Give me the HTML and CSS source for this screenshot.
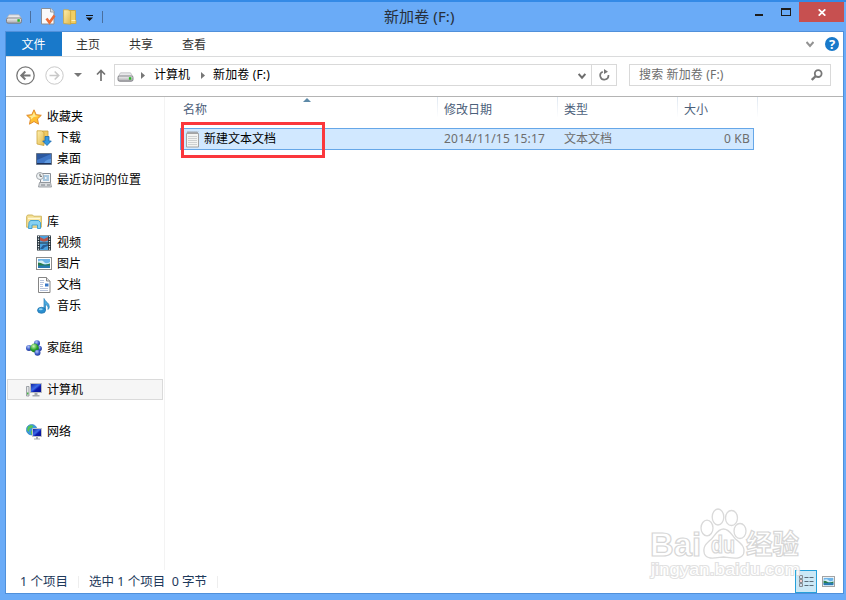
FILE: index.html
```html
<!DOCTYPE html>
<html lang="zh-CN">
<head>
    <meta charset="UTF-8">
    <title>新加卷 (F:)</title>
    <link rel="stylesheet" href="styles.css">
</head>
<body>
    <svg class="defs">
        <defs>
            <linearGradient id="metal" x1="0" y1="0" x2="0" y2="1">
                <stop offset="0" stop-color="#f4f4f4"/><stop offset="1" stop-color="#a8a8ac"/>
            </linearGradient>
            <linearGradient id="gold" x1="0" y1="0" x2="1" y2="1">
                <stop offset="0" stop-color="#fff0ae"/><stop offset="1" stop-color="#e0b84c"/>
            </linearGradient>
            <linearGradient id="screen" x1="0" y1="0" x2="1" y2="1">
                <stop offset="0" stop-color="#0c1c9c"/><stop offset="0.45" stop-color="#3c6ce8"/><stop offset="0.6" stop-color="#0c1cb0"/><stop offset="1" stop-color="#0a1490"/>
            </linearGradient>
            <radialGradient id="blueBall" cx="0.4" cy="0.3" r="0.7">
                <stop offset="0" stop-color="#b4c8f8"/><stop offset="0.6" stop-color="#3c5cc8"/><stop offset="1" stop-color="#243c9c"/>
            </radialGradient>
            <radialGradient id="greenBall" cx="0.4" cy="0.3" r="0.7">
                <stop offset="0" stop-color="#d0f4b8"/><stop offset="0.6" stop-color="#2ca42c"/><stop offset="1" stop-color="#127418"/>
            </radialGradient>
            <symbol id="drive" viewBox="0 0 16 10">
                <path d="M3 .8h10l2.500 4H.5z" fill="#e8e8ea" stroke="#b4b4b8" stroke-width=".7"/>
                <rect x=".5" y="4" width="15" height="5.200" rx="1.600" fill="url(#metal)" stroke="#77777d" stroke-width=".9"/>
                <rect x="11.400" y="5.200" width="2.400" height="2.500" fill="#25b526"/>
            </symbol>
            <symbol id="picture" viewBox="0 0 16 13">
                <rect x=".5" y=".5" width="15" height="12" fill="#fff" stroke="#8c8c8c"/>
                <path d="M2 2h12v9H2z" fill="#6db4e8"/>
                <path d="M2 4.500q4-2 6 .5t6 0v2H2z" fill="#d5edf8"/>
                <path d="M2 5.500q3 0 5 1.500t7-.5V9H2z" fill="#2b7d4c"/>
                <path d="M2 8.500h12V11H2z" fill="#2878b0"/>
            </symbol>
        </defs>
    </svg>

    <div class="window">
        <header class="titlebar">
            <div class="quick">
                <svg class="q-drive" width="16" height="10"><use href="#drive"/></svg>
                <i class="bar"></i>
                <svg class="q-check" width="15" height="17" viewBox="0 0 15 17">
                    <path d="M.5.5h9.500l3 3v12.500H.5z" fill="#fafafa" stroke="#8b8f96"/>
                    <path d="M9.500.5v3.500H13" fill="#ddd" stroke="#8b8f96" stroke-width=".8"/>
                    <path d="M5.500 10.500l3 4 5-7" fill="none" stroke="#ea6c38" stroke-width="2.600"/>
                </svg>
                <svg class="q-folder" width="14" height="16" viewBox="0 0 14 16">
                    <path d="M6 1.500h6.500v10H13v3H6z" fill="#f3cf62" stroke="#cfa535" stroke-width=".8"/>
                    <path d="M.6.8h4.500l2.500 1.500v13L.6 14.500z" fill="url(#gold)" stroke="#cda53c" stroke-width=".8"/>
                    <path d="M8.500 11.500h4" stroke="#fff3bc"/>
                </svg>
                <svg class="q-more" width="7" height="6" viewBox="0 0 7 6"><path d="M0 0h7v1H0zM0 2.500h7L3.500 6z" fill="#111"/></svg>
                <i class="bar last"></i>
            </div>
            <h1 class="title">新加卷 (F:)</h1>
            <div class="controls">
                <svg class="min" width="8" height="2"><path d="M0 0h8v2H0z" fill="#1d1d1d"/></svg>
                <svg class="max" width="10" height="8"><path d="M0 0h10v8H0zM1 2v5h8V2z" fill="#1d1d1d" fill-rule="evenodd"/></svg>
                <span class="close"><svg width="8" height="7" viewBox="0 0 8 7"><path d="M.7.3l6.600 6.400M7.300.3L.7 6.700" stroke="#fff" stroke-width="1.700"/></svg></span>
            </div>
        </header>

        <div class="client">
            <nav class="ribbon">
                <span class="tab file">文件</span>
                <span class="tab">主页</span>
                <span class="tab">共享</span>
                <span class="tab">查看</span>
                <svg class="expand" width="8" height="7" viewBox="0 0 8 7"><path d="M.5 1L4 5 7.500 1" fill="none" stroke="#929292" stroke-width="2"/></svg>
                <span class="help">?</span>
            </nav>

            <div class="navbar">
                <svg width="19" height="19" viewBox="0 0 19 19" fill="none" stroke="#767676">
                    <circle cx="9.500" cy="9.500" r="8.700" stroke-width="1.300"/>
                    <path d="M14.500 9.500H5.500M9.300 5.500l-4 4 4 4" stroke-width="2"/>
                </svg>
                <svg class="forward" width="19" height="19" viewBox="0 0 19 19" fill="none" stroke="#c9c9c9">
                    <circle cx="9.500" cy="9.500" r="8.700"/>
                    <path d="M4.500 9.500h9M9.700 5.500l4 4-4 4" stroke-width="1.600"/>
                </svg>
                <svg class="history" width="8" height="4"><path d="M0 0h8L4 4z" fill="#777"/></svg>
                <svg class="up" width="10" height="12" viewBox="0 0 10 12"><path d="M5 12V1.500M1 5.500l4-4 4 4" fill="none" stroke="#727272" stroke-width="1.700"/></svg>
                <div class="address">
                    <svg class="a-drive" width="17" height="10"><use href="#drive"/></svg>
                    <svg class="sep" width="4" height="7"><path d="M0 0l4 3.500L0 7z" fill="#777"/></svg>
                    <span class="crumb">计算机</span>
                    <svg class="sep" width="4" height="7"><path d="M0 0l4 3.500L0 7z" fill="#777"/></svg>
                    <span class="folder">新加卷 (F:)</span>
                    <svg class="drop" width="8" height="7" viewBox="0 0 8 7"><path d="M.6 1L4 4.700 7.400 1" fill="none" stroke="#6d6d6d" stroke-width="2"/></svg>
                    <span class="refresh">
                        <svg width="11" height="12" viewBox="0 0 11 12"><path d="M3.800 2.700A4.100 4.100 0 1 0 9.400 6" fill="none" stroke="#777" stroke-width="1.700"/><path d="M5 0v5l4-2.300z" fill="#777"/></svg>
                    </span>
                </div>
                <div class="search">
                    <span class="folder">搜索 新加卷 (F:)</span>
                    <svg width="12" height="12" viewBox="0 0 12 12" fill="none" stroke="#777"><circle cx="7.200" cy="4.600" r="3.400" stroke-width="1.800"/><path d="M4.800 7L.8 11" stroke-width="2.400"/></svg>
                </div>
            </div>

            <main class="content">
                <aside class="sidebar">
                    <ul>
                        <li>
                            <svg width="16" height="16" viewBox="0 0 16 16"><path d="M8 .8l2.200 4.900 5.100.6-3.800 3.600 1 5.300L8 12.500l-4.500 2.700 1-5.300L.7 6.300l5.100-.6z" fill="#ffc030" stroke="#e08a2c"/><path d="M8 3l1.300 3.500 3.500.5-5 1-3.500 3 .9-2.500L3 7l3.300-.6z" fill="#ffeb94"/></svg>
                            收藏夹
                        </li>
                        <li class="sub">
                            <svg width="16" height="16" viewBox="0 0 16 16"><path d="M6 1h6v12H6z" fill="#f0ca62" stroke="#c8a03c" stroke-width=".8"/><path d="M1 .8h4.500L8 2.500v13L1 14z" fill="url(#gold)" stroke="#cda53c" stroke-width=".8"/><path d="M9 6.500h4V11h2.300L11 15.500 6.700 11H9z" fill="#3598e0" stroke="#1768ad" stroke-width=".8"/></svg>
                            下载
                        </li>
                        <li class="sub">
                            <svg width="16" height="16" viewBox="0 0 16 16"><path d="M.5 2.500h15v11H.5z" fill="#3f76c6" stroke="#657387"/><path d="M1 3h14L1 9z" fill="#2c589f"/><path d="M8 12c2-3 4-4 7-4v4z" fill="#5f9ae0"/><path d="M1 12h14v1H1z" fill="#1c315a"/></svg>
                            桌面
                        </li>
                        <li class="sub">
                            <svg width="16" height="16" viewBox="0 0 16 16"><path d="M6 1.500h8.500v9H4.500v-3z" fill="#f3f5f7" stroke="#8a8f96"/><path d="M7 4h6M7 6h2M10.500 6H13M7 8h6" stroke="#5d9ac8"/><path d="M3.500 10.500h11l1 4.500h-13z" fill="#d6d9dc" stroke="#8a8f96" stroke-width=".8"/><path d="M5 13h4M11 13h3" stroke="#7c8288"/><circle cx="4" cy="4" r="3.500" fill="#eef2f4" stroke="#a3a8ac"/><path d="M4 1.800V4.300h2" fill="none" stroke="#666"/></svg>
                            最近访问的位置
                        </li>
                    </ul>
                    <ul>
                        <li>
                            <svg width="16" height="16" viewBox="0 0 16 16"><path d="M.6 2.500l1-1.500h5l1 1.200h7.800v11H.6z" fill="#f4de91" stroke="#cdb258" stroke-width=".9"/><path d="M2 4.500h12" stroke="#fff8d6" stroke-width="1.500"/><path d="M3 8.500L4.500 6.500h8L14.500 8.500v6h-3V11H6v3.500H2.500z" fill="#86d0f1" stroke="#399bce" stroke-width=".9"/></svg>
                            库
                        </li>
                        <li class="sub">
                            <svg width="16" height="16" viewBox="0 0 16 16"><path d="M1 .5h14v15H1z" fill="#24313a"/><path d="M4 1h8v6.500H4zM4 8.500h8V15H4z" fill="#4aa1df"/><path d="M4 2l4 2 4-2v3.500L9 6.500H7l-3-1z" fill="#b85448"/><path d="M4 14l3-4h2l3-1v2l-3 1-2 2z" fill="#285c94"/><path d="M2.500 1v14M13.500 1v14" stroke="#eef3f5" stroke-width="1.300" stroke-dasharray="1.300 1.200"/></svg>
                            视频
                        </li>
                        <li class="sub">
                            <svg width="16" height="13"><use href="#picture"/></svg>
                            图片
                        </li>
                        <li class="sub">
                            <svg width="16" height="16" viewBox="0 0 16 16"><path d="M2.500.5h8l3.500 3.500v11.500H2.500z" fill="#fff" stroke="#858585"/><path d="M10.500.5V4H14" fill="#e4e4e4" stroke="#858585"/><path d="M4 3.500h4M4 5.500h4M4 7.500h3M4 9.500h3M4 11.500h8M4 13.500h8" stroke="#b8c4dc"/><path d="M9 6.500h3.500v3H9z" fill="#3b78c6"/></svg>
                            文档
                        </li>
                        <li class="sub">
                            <svg width="16" height="16" viewBox="0 0 16 16"><path d="M8 .5c1 3.500 5.500 4 5.300 8.500-.1 1-.6 2-1.300 2.500.6-3-1-4.700-2.500-5v5.500H8z" fill="#4baae0" stroke="#287fb8" stroke-width=".7"/><ellipse cx="5.500" cy="12.300" rx="4" ry="3" fill="#2a8fd0" stroke="#1d6fa8" stroke-width=".7"/><ellipse cx="4.700" cy="11.300" rx="2" ry="1" fill="#8fd4f5"/></svg>
                            音乐
                        </li>
                    </ul>
                    <ul>
                        <li>
                            <svg width="16" height="16" viewBox="0 0 16 16"><circle cx="11" cy="3.300" r="3" fill="url(#blueBall)"/><circle cx="3" cy="8" r="3" fill="url(#blueBall)"/><circle cx="13.200" cy="8.500" r="2.700" fill="url(#blueBall)"/><circle cx="8.500" cy="8" r="4.400" fill="url(#greenBall)"/><circle cx="11.500" cy="12.800" r="3" fill="url(#blueBall)"/></svg>
                            家庭组
                        </li>
                    </ul>
                    <ul>
                        <li class="selected">
                            <svg width="16" height="16" viewBox="0 0 16 16"><path d="M.5 4.500h2.500v9.500H.5z" fill="#e3e5e8" stroke="#8c9096" stroke-width=".8"/><path d="M1 10.500h1.500v2H1z" fill="#4ab548"/><path d="M4.500 1.500h11v9h-11z" fill="url(#screen)" stroke="#b9bcc0"/><path d="M8.500 11h3v2h2v1.500h-7V13h2z" fill="#a4a8ad"/></svg>
                            计算机
                        </li>
                    </ul>
                    <ul>
                        <li>
                            <svg width="16" height="16" viewBox="0 0 16 16"><circle cx="5.700" cy="5.700" r="5.300" fill="#3b9ae0" stroke="#2278b8" stroke-width=".6"/><path d="M2 2.500l3-1.500 2.500 1-1.500 2-2 .5L2.500 8 1 6zM5 6.500l3 .5-1 3.500H5z" fill="#57c355"/><path d="M6.500 4.500h9v8h-9z" fill="url(#screen)" stroke="#bfc3c8"/><path d="M10 13h2v1.500h2v1H8v-1h2z" fill="#a4a8ad"/></svg>
                            网络
                        </li>
                    </ul>
                </aside>

                <section class="files">
                    <div class="columns head">
                        <span>名称<i class="sort"></i></span>
                        <span>修改日期</span>
                        <span>类型</span>
                        <span>大小</span>
                    </div>
                    <div class="columns row">
                        <span class="name">
                            <svg width="14" height="17" viewBox="0 0 14 17"><path d="M.5 2.500h12v13.500H.5z" fill="#f4f4f2" stroke="#a4a4a4"/><path d="M2 5.500h9M2 7.500h9M2 9.500h9M2 11.500h9M2 13.500h9" stroke="#ced0d0"/><path d="M1 2l1-1.500L3 2l1-1.500L5 2l1-1.500L7 2l1-1.500L9 2l1-1.500L11 2l1-1.500" fill="none" stroke="#999" stroke-width=".9"/></svg>
                            新建文本文档
                        </span>
                        <span class="date">2014/11/15 15:17</span>
                        <span>文本文档</span>
                        <span class="size">0 KB</span>
                        <i class="marker"></i>
                    </div>
                </section>
            </main>

            <footer class="status">
                <span class="count">1 个项目</span>
                <span class="picked">选中 1 个项目&nbsp; 0 字节</span>
                <div class="views">
                    <span class="view active">
                        <svg width="15" height="13" viewBox="0 0 15 13"><path d="M.5.5h3v3h-3zM.5 4.500h3v3h-3zM.5 8.500h3v3h-3z" fill="#fff" stroke="#858b90"/><path d="M1.500 1.500h1v1h-1z" fill="#3b7cc0"/><path d="M1.500 5.500h1v1h-1z" fill="#c33"/><path d="M1.500 9.500h1v1h-1z" fill="#286cb0"/><path d="M5.500 2.500h4M10.500 2.500h4M5.500 6.500h4M10.500 6.500h4M5.500 10.500h4M10.500 10.500h4" stroke="#5b6b78"/></svg>
                    </span>
                    <svg class="large" width="13" height="11"><use href="#picture"/></svg>
                </div>
            </footer>
        </div>

        <svg class="watermark" width="156" height="78" viewBox="0 0 156 78">
            <g fill="#fff" stroke="#d6d6d6" stroke-width="1.300">
                <ellipse cx="59" cy="23" rx="6" ry="7.800"/>
                <ellipse cx="70" cy="12" rx="5.800" ry="8"/>
                <ellipse cx="83.500" cy="13" rx="6" ry="7.500"/>
                <ellipse cx="92" cy="26" rx="6" ry="7.500"/>
                <path d="M75.500 24c6 0 8 6 12 10 6 5 10 8 8 15-3 6-11 4-20 3-9 1-16 3-19-3-2-7 1-10 7-15 4-4 6-10 12-10z"/>
            </g>
            <g class="logo">
                <text x="2" y="51" font-size="34" textLength="51" lengthAdjust="spacingAndGlyphs">Bai</text>
                <text x="63" y="48" font-size="23" textLength="24" lengthAdjust="spacingAndGlyphs">du</text>
                <text x="98" y="49" font-size="27" textLength="53" lengthAdjust="spacingAndGlyphs">经验</text>
                <text class="url" x="3" y="70" font-size="17" textLength="149" lengthAdjust="spacingAndGlyphs">jingyan.baidu.com</text>
            </g>
        </svg>
    </div>
</body>
</html>
```
FILE: styles.css
```css
* {
    box-sizing: border-box;
}

body {
    margin: 0;
    overflow: hidden;
    font: 12px/20px "Noto Sans", "Noto Sans CJK SC", sans-serif;
    color: #000;
}

svg {
    display: block;
    flex: none;
}

.defs {
    position: absolute;
    width: 0;
    height: 0;
}

.window {
    position: relative;
    display: flex;
    flex-direction: column;
    width: 846px;
    height: 600px;
    padding: 0 2px 6px 5px;
    border-top: 2px solid #348ae6;
    background: #6aabf7;
}

/* title bar */
.titlebar {
    display: grid;
    grid-template-columns: 379px auto 1fr;
    height: 29px;
}

.quick {
    display: flex;
    align-items: center;
    height: 29px;
}

.q-drive { margin: 5px 0 0 1px; }
.q-check { margin-left: 10px; }
.q-folder { margin-left: 7px; }
.q-more { margin: 3px 0 0 9px; }

.bar {
    width: 1px;
    height: 12px;
    margin-left: 8px;
    background: #4a6f9f;
}

.bar.last {
    margin-left: 9px;
}

.title {
    margin: 0;
    font-size: 15px;
    font-weight: normal;
    line-height: 29px;
    letter-spacing: 0.1px;
    color: #272f3a;
}

.controls {
    display: flex;
    justify-content: flex-end;
}

.min { margin: 12px 18px 0 0; }
.max { margin: 6px 8px 0 0; }

.close {
    display: flex;
    align-items: center;
    justify-content: center;
    width: 45px;
    height: 20px;
    background: #c75050;
}

/* everything inside the frame */
.client {
    display: flex;
    flex: 1;
    flex-direction: column;
    border: 1px solid #5090da;
    background: #fff;
}

.ribbon {
    display: flex;
    align-items: center;
    height: 25px;
    padding-right: 4px;
    border-bottom: 1px solid #dadbdc;
}

.tab {
    width: 53px;
    height: 24px;
    padding-right: 1px;
    line-height: 25px;
    text-align: center;
    color: #333;
}

.tab.file {
    width: 56px;
    background: #1979ca;
    color: #fff;
}

.expand {
    margin-left: auto;
}

.help {
    width: 14px;
    height: 14px;
    margin-left: 11px;
    border-radius: 50%;
    background: #1979ca;
    color: #fff;
    font-size: 13px;
    font-weight: bold;
    line-height: 14px;
    text-align: center;
}

.navbar {
    display: flex;
    align-items: center;
    height: 40px;
    padding: 0 12px 3px 10px;
    border-bottom: 1px solid #b4b4b4;
}

.forward { margin-left: 10px; }
.history { margin-left: 10px; }
.up { margin-left: 14px; }

.address,
.search {
    display: flex;
    align-items: center;
    height: 22px;
    border: 1px solid #d9d9d9;
}

.address {
    width: 503px;
    margin-left: 8px;
}

.a-drive { margin: 4px 0 0 2px; }
.sep { margin: 0 8px 0 7px; }
.crumb { margin: 0 4px 0 1px; }
.folder { letter-spacing: 0.15px; }
.drop { margin: 2px 5px 0 auto; }

.refresh {
    display: flex;
    align-items: center;
    justify-content: center;
    width: 25px;
    height: 20px;
    border-left: 1px solid #d9d9d9;
}

.search {
    flex: 1;
    justify-content: space-between;
    margin-left: 12px;
    padding: 0 7px 0 9px;
    color: #6d6d6d;
}

.content {
    display: flex;
    flex: 1;
}

.sidebar {
    width: 159px;
    padding: 9px 1px 0 1px;
    border-right: 1px solid #f3f3f3;
}

.sidebar ul {
    margin: 0 0 21px;
    padding: 0;
    list-style: none;
}

.sidebar li {
    display: flex;
    gap: 5px;
    align-items: center;
    height: 21px;
    padding-left: 19px;
}

.sidebar .sub {
    padding-left: 29px;
}

.sidebar .selected {
    padding-left: 18px;
    border: 1px solid #dadada;
    background: #f6f6f6;
}

.files {
    flex: 1;
    padding-left: 15px;
}

.columns {
    display: grid;
    grid-template-columns: 258px 120px 120px 1fr;
    width: 578px;
}

.head {
    height: 31px;
    line-height: 26px;
    color: #4c607a;
}

.head span {
    position: relative;
    height: 20px;
    padding-left: 6px;
    border-right: 1px solid;
    border-image: linear-gradient(#dde6f0, #fff) 1;
}

.head span:first-child {
    padding-left: 3px;
}

.sort {
    position: absolute;
    top: 1px;
    left: 123px;
    border: solid transparent;
    border-width: 0 4px 4px;
    border-bottom-color: #5d8aa8;
}

.row {
    position: relative;
    width: 574px;
    height: 22px;
    border: 1px solid #66a7e8;
    background: #d1e8ff;
    color: #6d6d6d;
}

.row span {
    padding-left: 5px;
}

.row .name {
    display: flex;
    gap: 4px;
    align-items: center;
    color: #000;
}

.row .date {
    letter-spacing: 0.22px;
}

.row .size {
    padding-right: 3px;
    letter-spacing: 0.2px;
    text-align: right;
}

/* red frame drawn over the selected file */
.marker {
    position: absolute;
    top: -7px;
    left: 0;
    width: 144px;
    height: 36px;
    border: 3px solid #fb373c;
}

.status {
    display: flex;
    align-items: center;
    height: 23px;
    padding-left: 14px;
    font-size: 12.5px;
    color: #1e395b;
}

.count,
.picked {
    height: 12px;
    line-height: 11px;
    border-right: 1px solid #eee;
}

.count {
    width: 59px;
}

.picked {
    width: 139px;
    padding-left: 10px;
}

.views {
    display: flex;
    align-items: center;
    margin-left: auto;
    padding-right: 8px;
}

.view {
    display: flex;
    align-items: center;
    justify-content: center;
    width: 22px;
    height: 23px;
    border: 1px solid #26a0da;
    background: #cbe8f6;
}

.large {
    margin-left: 5px;
}

/* logo floating over the lower right corner */
.watermark {
    position: absolute;
    left: 648px;
    top: 503px;
    opacity: 0.9;
}

.logo text {
    font-family: "Liberation Sans", "Noto Sans CJK SC", sans-serif;
    font-weight: bold;
    fill: #fff;
    stroke: #d2d2d2;
    stroke-width: 1.2px;
}

.logo .url {
    font-weight: normal;
    stroke: #dedede;
    stroke-width: 2px;
    paint-order: stroke;
}
```
